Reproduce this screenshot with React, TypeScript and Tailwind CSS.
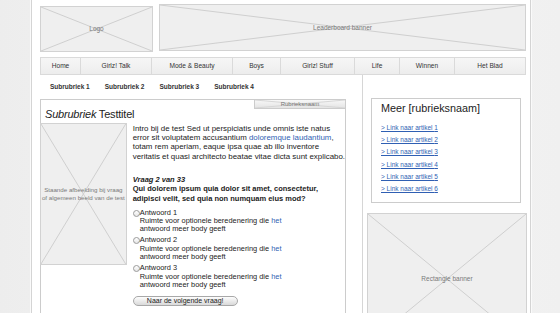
import React from "react";

function XBox({
  className,
  label,
  labelClass,
}: {
  className: string;
  label?: React.ReactNode;
  labelClass?: string;
}) {
  return (
    <div className={"relative border border-[#d2d2d2] bg-[#efefef] overflow-hidden " + className}>
      <svg className="absolute inset-0 w-full h-full" preserveAspectRatio="none" viewBox="0 0 100 100">
        <line x1="0" y1="0" x2="100" y2="100" stroke="#cfcfcf" strokeWidth="1" vectorEffect="non-scaling-stroke" />
        <line x1="100" y1="0" x2="0" y2="100" stroke="#cfcfcf" strokeWidth="1" vectorEffect="non-scaling-stroke" />
      </svg>
      {label ? (
        <div className={"absolute inset-0 flex items-center justify-center text-center whitespace-nowrap text-[#7a7a7a] " + (labelClass ?? "text-[6.5px]")}>
          <span className="relative">{label}</span>
        </div>
      ) : null}
    </div>
  );
}

const navItems: [string, string][] = [
  ["Home", "w-[40px]"],
  ["Girlz! Talk", "w-[71px]"],
  ["Mode & Beauty", "w-[81px]"],
  ["Boys", "w-[48px]"],
  ["Girlz! Stuff", "w-[74px]"],
  ["Life", "w-[45px]"],
  ["Winnen", "w-[55px]"],
  ["Het Blad", "flex-1"],
];

function Answer({ n }: { n: number }) {
  return (
    <div className="flex items-start">
      <div className="mt-[1px] w-[7px] h-[7px] rounded-full border border-[#9a9a9a] bg-gradient-to-b from-white to-[#e6e6e6] shrink-0" />
      <div className="leading-[8.4px] text-[7.4px] text-[#222] whitespace-nowrap">
        <div>Antwoord {n}</div>
        <div>
          Ruimte voor optionele beredenering die <span className="text-[#2f5fb3]">het</span>
        </div>
        <div>antwoord meer body geeft</div>
      </div>
    </div>
  );
}

export default function App() {
  return (
    <div className="w-[560px] h-[313px] overflow-hidden bg-gradient-to-r from-[#ededed] via-[#f6f6f6] to-[#f0f0f0] font-['Liberation_Sans',Arial,sans-serif]">
      <div className="ml-[31px] w-[500px] min-h-[360px] bg-white border-l border-r border-[#d4d4d4] pl-[8px] pr-[4px] shadow-[-1px_0_0_#fafafa,1px_0_0_#fafafa]">
        {/* header */}
        <div className="flex items-start h-[52px]">
          <XBox className="mt-[6px] w-[113px] h-[46px]" label="Logo" />
          <XBox className="ml-[6px] mt-[4px] w-[367px] h-[47px]" label="Leaderboard banner" />
        </div>
        {/* nav */}
        <div className="mt-[5px] h-[18px] flex border border-[#dadada] bg-gradient-to-b from-[#f6f6f6] to-[#ededed]">
          {navItems.map(([t, w], i) => (
            <div
              key={t}
              className={
                "flex items-center justify-center text-[6.6px] text-[#333] " +
                w +
                (i < navItems.length - 1 ? " border-r border-[#dadada]" : "")
              }
            >
              {t}
            </div>
          ))}
        </div>
        {/* body */}
        <div className="flex">
          <div className="w-[322px] shrink-0">
            <div className="h-[24px] flex items-center pl-[10px] gap-[15px] text-[6.5px] font-bold text-[#333]">
              <span>Subrubriek 1</span>
              <span>Subrubriek 2</span>
              <span>Subrubriek 3</span>
              <span>Subrubriek 4</span>
            </div>
            <div className="relative w-[306px] min-h-[240px] border-l border-t border-r border-[#cccccc]">
              <div className="absolute right-[-1px] top-[-1px] w-[92px] h-[10px] border border-[#cccccc] bg-gradient-to-b from-[#f8f8f8] to-[#e4e4e4] overflow-hidden">
                <svg className="absolute inset-0 w-full h-full" preserveAspectRatio="none" viewBox="0 0 100 100">
                  <line x1="0" y1="0" x2="100" y2="100" stroke="#d6d6d6" strokeWidth="1" vectorEffect="non-scaling-stroke" />
                  <line x1="100" y1="0" x2="0" y2="100" stroke="#d6d6d6" strokeWidth="1" vectorEffect="non-scaling-stroke" />
                </svg>
                <div className="absolute inset-0 flex items-center justify-center text-[6px] text-[#777]">
                  Rubrieksnaam
                </div>
              </div>
              <div className="h-[23px] pl-[4px] pt-[8px] text-[11px] leading-[13px] tracking-[-0.2px] text-[#222]">
                <span className="italic">Subrubriek</span> Testtitel
              </div>
              <div className="flex items-start">
                <XBox
                  className="-ml-[1px] w-[90px] h-[142px]"
                  labelClass="text-[6.2px] leading-[8px]"
                  label={
                    <>
                      Staande afbeelding bij vraag
                      <br />
                      of algemeen beeld van de test
                    </>
                  }
                />
                <div className="ml-[6px] text-[#222]">
                  <div className="mt-[1px] text-[7.9px] leading-[9.2px] whitespace-nowrap">
                    <div>Intro bij de test Sed ut perspiciatis unde omnis iste natus</div>
                    <div>
                      error sit voluptatem accusantium <span className="text-[#2f5fb3]">doloremque laudantium</span>,
                    </div>
                    <div>totam rem aperiam, eaque ipsa quae ab illo inventore</div>
                    <div>veritatis et quasi architecto beatae vitae dicta sunt explicabo.</div>
                  </div>
                  <div className="mt-[14px] text-[7.5px] leading-[9.6px] font-bold whitespace-nowrap">
                    <div className="italic">Vraag 2 van 33</div>
                    <div>Qui dolorem ipsum quia dolor sit amet, consectetur,</div>
                    <div>adipisci velit, sed quia non numquam eius mod?</div>
                  </div>
                  <div className="mt-[5px] flex flex-col gap-[2.6px]">
                    <Answer n={1} />
                    <Answer n={2} />
                    <Answer n={3} />
                  </div>
                  <div className="mt-[7px] w-[105px] h-[10px] rounded-full border border-[#a8a8a8] bg-gradient-to-b from-[#fdfdfd] to-[#d9d9d9] flex items-center justify-center text-[7px] text-[#222]">
                    Naar de volgende vraag!
                  </div>
                </div>
              </div>
            </div>
          </div>
          <div className="flex-1 border-l border-[#d6d6d6] min-h-[260px]">
            <div className="mt-[23px] ml-[8px] w-[150px] h-[105px] border border-[#cccccc] pl-[9px]">
              <div className="pt-[3px] text-[10.8px] leading-[13px] text-[#222]">Meer [rubrieksnaam]</div>
              <div className="mt-[7px] flex flex-col text-[6.5px] leading-[12.2px] text-[#2f5fb3]">
                {[1, 2, 3, 4, 5, 6].map((n) => (
                  <span key={n} className="underline">
                    &gt; Link naar artikel {n}
                  </span>
                ))}
              </div>
            </div>
            <XBox className="mt-[10px] ml-[4px] w-[160px] h-[132px]" label="Rectangle banner" />
          </div>
        </div>
      </div>
    </div>
  );
}
